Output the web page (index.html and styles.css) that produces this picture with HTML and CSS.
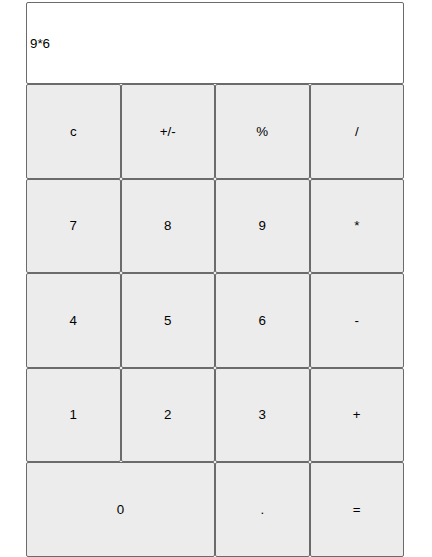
FILE: index.html
```html
<!DOCTYPE html>
<html>
<head>
<meta charset="utf-8">
<link rel="stylesheet" href="styles.css">
</head>
<body>
<div class="calc">
  <div class="display">9*6</div>
  <div class="keys">
    <button class="key">c</button>
    <button class="key">+/-</button>
    <button class="key">%</button>
    <button class="key">/</button>
    <button class="key">7</button>
    <button class="key">8</button>
    <button class="key">9</button>
    <button class="key">*</button>
    <button class="key">4</button>
    <button class="key">5</button>
    <button class="key">6</button>
    <button class="key">-</button>
    <button class="key">1</button>
    <button class="key">2</button>
    <button class="key">3</button>
    <button class="key">+</button>
    <button class="key key-wide">0</button>
    <button class="key">.</button>
    <button class="key">=</button>
  </div>
</div>
</body>
</html>
```

FILE: styles.css
```css
html, body {
  margin: 0;
  padding: 0;
  background: #ffffff;
}
body {
  font-family: "Liberation Sans", Arial, sans-serif;
}
.calc {
  width: 378px;
  margin: 2px 0 0 26px;
}
.display {
  box-sizing: border-box;
  height: 82px;
  border: 1px solid #6b6b6b;
  border-radius: 2px;
  display: flex;
  align-items: center;
  padding-left: 3px;
  font-size: 13.333px;
  color: #000;
}
.keys {
  display: grid;
  grid-template-columns: repeat(4, 1fr);
  grid-auto-rows: 94.5px;
}
.key {
  box-sizing: border-box;
  margin: 0;
  padding: 0;
  border: 1px solid #6b6b6b;
  border-radius: 2px;
  background: #ececec;
  font-family: "Liberation Sans", Arial, sans-serif;
  font-size: 13.333px;
  color: #000;
}
.key-wide {
  grid-column: span 2;
}
```
